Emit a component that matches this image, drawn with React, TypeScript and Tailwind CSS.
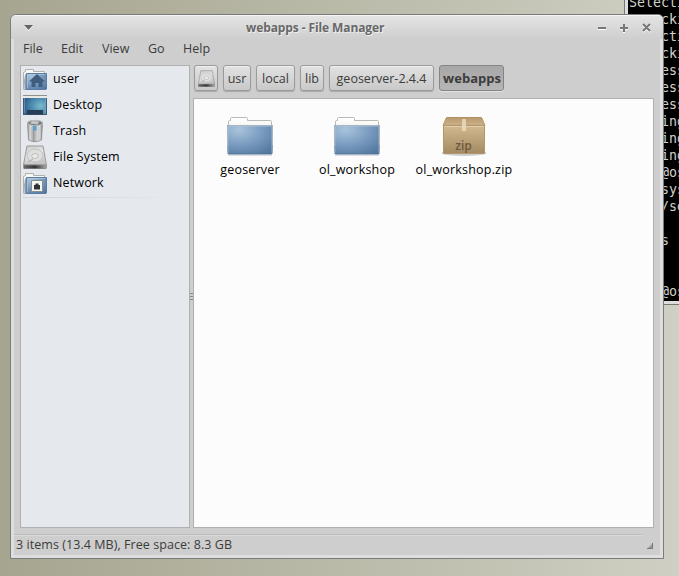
import React from 'react';

const terminalRows = ['Selecti', 'cki', 'cti', 'cki', 'ess', 'ess', 'ess', 'ing', 'ing', 'ing', '@os', 'sys', '/se', '', 's', '', '', '@os'];

const menus = [
  { label: 'File', width: 'w-[38px]' },
  { label: 'Edit', width: 'w-[41px]' },
  { label: 'View', width: 'w-[46px]' },
  { label: 'Go', width: 'w-[35px]' },
  { label: 'Help', width: 'w-[40px]' },
];

const crumbs = [
  { label: 'usr', width: 'w-[28px]' },
  { label: 'local', width: 'w-[39px]' },
  { label: 'lib', width: 'w-[24px]' },
  { label: 'geoserver-2.4.4', width: 'w-[105px]' },
];

function Gradients() {
  return (
    <svg className="absolute h-0 w-0">
      <defs>
        <radialGradient id="blue" cx="0.25" cy="0.15" r="1.1">
          <stop offset="0" stopColor="#a9c4dc" />
          <stop offset="0.5" stopColor="#789abf" />
          <stop offset="1" stopColor="#4d7199" />
        </radialGradient>
        <linearGradient id="paper" x2="0" y2="1">
          <stop offset="0" stopColor="#fff" />
          <stop offset="1" stopColor="#d9d9d5" />
        </linearGradient>
        <radialGradient id="screen" cx="0.75" cy="0.55" r="0.8">
          <stop offset="0" stopColor="#7cbccb" />
          <stop offset="0.5" stopColor="#4c8cb0" />
          <stop offset="1" stopColor="#2b5988" />
        </radialGradient>
        <linearGradient id="metal" x2="1" y2="0">
          <stop offset="0" stopColor="#85878a" />
          <stop offset="0.2" stopColor="#e9e9e9" />
          <stop offset="0.4" stopColor="#9a9c9e" />
          <stop offset="0.6" stopColor="#c9caca" />
          <stop offset="0.8" stopColor="#e6e6e6" />
          <stop offset="1" stopColor="#77797b" />
        </linearGradient>
        <linearGradient id="disk" x2="0.3" y2="1">
          <stop offset="0" stopColor="#cacaca" />
          <stop offset="0.5" stopColor="#e8e8e8" />
          <stop offset="1" stopColor="#c4c4c4" />
        </linearGradient>
        <linearGradient id="base" x2="1" y2="0">
          <stop offset="0" stopColor="#6a6a6a" />
          <stop offset="0.5" stopColor="#333" />
          <stop offset="1" stopColor="#aaa" />
        </linearGradient>
        <linearGradient id="box" x2="0" y2="1">
          <stop offset="0" stopColor="#d3b98f" />
          <stop offset="1" stopColor="#a48a62" />
        </linearGradient>
        <linearGradient id="lid" x2="0" y2="1">
          <stop offset="0" stopColor="#b99a6f" />
          <stop offset="1" stopColor="#cdb088" />
        </linearGradient>
      </defs>
    </svg>
  );
}

function Folder() {
  return (
    <svg width="48" height="48" viewBox="0 0 48 48" className="block">
      <path d="M2 38h44v1H2z" fill="#000" opacity=".13" />
      <path d="M2.5 36V4.500Q2.500 3.500 3.500 3.500H4.500V1.500Q4.500.5 5.500.5H20.500Q21.500.5 21.500 1.500V3.500H44.500Q45.500 3.500 45.500 4.500V36Z" fill="url(#paper)" stroke="#b9b9b5" />
      <path d="M1.500 8.500h45l-.5 28q0 .5-.5.5h-43q-.5 0-.5-.5z" fill="url(#blue)" stroke="#527397" />
      <path d="M2.500 36V9.500H45.500V36" fill="none" stroke="#c5d8e8" strokeOpacity=".3" />
      <path d="M1.500 29V8.500H46.500V28" fill="none" stroke="#b5bfc8" strokeOpacity=".85" />
    </svg>
  );
}

function SmallFolder({ kind }: { kind: 'home' | 'network' }) {
  return (
    <svg width="24" height="24" viewBox="0 0 24 24" className="block">
      <path d="M.5 20.500V5.500L2.500 4.500V2.500H10.500V4.500H21.500V9L3.500 22Z" fill="#f7f7f4" stroke="#b0b1af" />
      <path d="M.5 21.500L2.500 7.500V22.500H.8z" fill="#c9ced3" stroke="#a4abb1" />
      <path d="M3.500 6.500h20v15.500l-.5.5H3z" fill="url(#blue)" stroke="#5a7da5" />
      <path d="M4.500 21.500V7.500H22.500" fill="none" stroke="#b5cee3" strokeOpacity=".6" />
      {kind === 'home' ? (
        <path d="M14 7l8 7.500h-2.500V20H15.500v-4h-3v4H8.500v-5.500H6z" fill="#405d7f" />
      ) : (
        <>
          <path d="M8.500 9.500h11v11h-11z" fill="#f6f6f2" stroke="#8a8e8b" />
          <path d="M11 14h1.500v-1.500h3V14H17v4.500h-6z" fill="#303334" />
        </>
      )}
    </svg>
  );
}

function DesktopIcon() {
  return (
    <svg width="24" height="24" viewBox="0 0 24 24" className="block">
      <rect x=".5" y="2.500" width="23" height="19" fill="url(#screen)" stroke="#3c5b7b" />
      <path d="M0 2h24v3H0z" fill="#e8e8e5" />
      <path d="M0 2h24v1H0z" fill="#8f918f" />
      <path d="M4 17h16v4.500H4z" fill="#263d53" />
      <path d="M1.500 5v15.500M22.500 5v15.500" stroke="#86a9c4" strokeOpacity=".6" />
    </svg>
  );
}

function TrashIcon() {
  return (
    <svg width="24" height="24" viewBox="0 0 24 24" className="block">
      <path d="M4.500 4L5.500 21q6.500 3.500 13 0L19.500 4z" fill="url(#metal)" stroke="#8a8c8e" strokeWidth=".8" />
      <ellipse cx="12" cy="4" rx="7.500" ry="2.700" fill="#77797c" stroke="#b9baba" strokeWidth="1.200" />
      <path d="M7 4.500l2-2.500 7 .5-1 3z" fill="#c4c6c8" />
      <path d="M10 6.500l3.500.5v5l-1.500-1-2 1z" fill="#5aa0cf" />
      <path d="M8 8v13.500M16 8v13.500" stroke="#777" strokeOpacity=".35" />
    </svg>
  );
}

function DiskIcon({ size }: { size: number }) {
  return (
    <svg width={size} height={size} viewBox="0 0 24 24" className="block">
      <path d="M.7 19h22.600V23q0 .7-.7.700H1.400Q.7 23.700.7 23z" fill="url(#base)" stroke="#777" strokeWidth=".7" />
      <path d="M4 1h16l3.300 18q-.2.800-1 .800H1.700q-.8 0-1-.800z" fill="url(#disk)" stroke="#999" />
      <ellipse cx="12" cy="10.500" rx="8" ry="6.500" fill="#dedede" stroke="#c2c2c2" />
      <ellipse cx="12" cy="11" rx="3.300" ry="2.400" fill="#eaeaea" stroke="#bdbdbd" />
      <path d="M5 17l5-3" stroke="#aaa" />
    </svg>
  );
}

function ZipIcon() {
  return (
    <div className="relative h-12 w-12">
      <svg width="48" height="48" viewBox="0 0 48 48" className="block">
        <ellipse cx="24" cy="36" rx="22.500" ry="3" fill="#000" opacity=".18" />
        <path d="M6.500.5h35l3.500 8H3z" fill="url(#lid)" stroke="#b39366" />
        <path d="M3.500 8.500h41v28h-41z" fill="url(#box)" stroke="#b3966b" />
        <path d="M4.500 9.500h39" stroke="#e4cfaa" />
        <path d="M22 2h4v12h-4z" fill="#eee0c6" opacity=".75" />
      </svg>
      <span className="absolute left-0 top-[21px] w-12 text-center text-[12px] font-semibold leading-4 text-[#6b5a40]">zip</span>
    </div>
  );
}

const places = [
  { label: 'user', icon: <SmallFolder kind="home" /> },
  { label: 'Desktop', icon: <DesktopIcon /> },
  { label: 'Trash', icon: <TrashIcon /> },
  { label: 'File System', icon: <DiskIcon size={24} /> },
  { label: 'Network', icon: <SmallFolder kind="network" /> },
];

const files = [
  { label: 'geoserver', icon: <Folder /> },
  { label: 'ol_workshop', icon: <Folder /> },
  { label: 'ol_workshop.zip', icon: <ZipIcon /> },
];

function Terminal() {
  return (
    <div className="absolute left-[624px] top-0 h-[305px] w-[55px] overflow-hidden border-b border-l border-[#777] bg-[#dedede] pb-[3px] pl-[3px]">
      <div className="flow-root h-full bg-black pl-px font-['DejaVu_Sans_Mono',monospace] text-[13.300px] text-[#d0d0ca]">
        <div className="-mt-[6px]">
          {terminalRows.map((row, i) => (
            <div key={i} className={`h-[17px] whitespace-pre leading-[17px] ${i === 0 ? '' : 'pl-8'}`}>{row}</div>
          ))}
        </div>
      </div>
    </div>
  );
}

function TitleBar() {
  return (
    <header className="flex h-[23px] items-center bg-linear-to-b from-[#e4e4e4] to-[#cecece] pl-[13px] pr-[12px] pt-px">
      <svg width="9" height="6" viewBox="0 0 9 6"><path d="M0 1h9L4.500 6z" fill="#fff" /><path d="M0 0h9L4.500 5z" fill="#666" /></svg>
      <h1 className="ml-[213px] w-[140px] whitespace-nowrap text-[12px] font-bold leading-4 tracking-[-0.1px] text-[#686868] [text-shadow:1px_1px_0_#eee]">webapps - File Manager</h1>
      <svg className="ml-auto" width="54" height="12" viewBox="0 0 54 12">
        <g fill="none" stroke="#fff" strokeWidth="2" transform="translate(0 1)"><path d="M1 6h8M23 6h8M27 2v8M46 2l7 7M53 2l-7 7" /></g>
        <g fill="none" stroke="#777" strokeWidth="2"><path d="M1 6h8M23 6h8M27 2v8M46 2l7 7M53 2l-7 7" /></g>
      </svg>
    </header>
  );
}

function PathBar() {
  const button = 'flex h-[26px] items-center justify-center rounded-[3px] border border-[#9b9b9b] bg-linear-to-b from-[#e2e2e2] to-[#c9c9c9] shadow-[inset_0_1px_0_#f0f0f0,0_1px_1px_#aaa]';
  return (
    <nav className="flex h-[33px] gap-[5px] pl-px text-[12.500px]">
      <button className={`${button} w-[24px]`}><DiskIcon size={17} /></button>
      {crumbs.map((c) => <button key={c.label} className={`${button} pt-[2px] ${c.width}`}>{c.label}</button>)}
      <button className="flex h-[26px] w-[65px] items-center justify-center rounded-[3px] border border-[#858585] bg-linear-to-b from-[#a7a7a7] to-[#b6b6b6] pl-px pt-[2px] text-[13px] font-bold shadow-[0_1px_0_#e2e2e2]">webapps</button>
    </nav>
  );
}

export default function App() {
  return (
    <div className="relative h-[576px] w-[679px] overflow-hidden bg-linear-to-r from-[#a6a590] via-[#babaa9] to-[#cfcfc3] font-['Open_Sans','Noto_Sans',sans-serif] text-[12.500px] text-[#3c3c3c]">
      <Gradients />
      <Terminal />
      <main className="absolute left-[10px] top-[14px] flex h-[545px] w-[654px] flex-col overflow-hidden rounded-t-[6px] border border-[#7b7b7b] bg-[#cecece]">
        <div className="h-px shrink-0 bg-[#f5f5f5]" />
        <TitleBar />
        <div className="flex min-h-0 flex-1 flex-col border-x-[3px] border-b-[3px] border-[#dedede]">
          <div className="flex h-[26px] items-start pl-[9px] leading-[19px]">
            {menus.map((m) => <span key={m.label} className={m.width}>{m.label}</span>)}
          </div>
          <div className="flex h-[463px] pl-[6px]">
            <aside className="w-[170px] border border-[#b0b0b0] bg-[#e5e9ee] pl-[2px] text-black">
              {places.map((p) => (
                <div key={p.label} className="flex h-[26px] items-center gap-[6px]">{p.icon}<span className="tracking-[0.15px]">{p.label}</span></div>
              ))}
              <div className="mt-px h-px w-[155px] bg-linear-to-r from-[#cfd3d8] to-[#e5e9ee]" />
            </aside>
            <div className="flex w-[3px] flex-col items-center justify-center gap-[2px]">
              {[0, 1, 2].map((i) => <i key={i} className="block h-px w-[3px] bg-[#888]" />)}
            </div>
            <section className="flex w-[461px] flex-col">
              <PathBar />
              <div className="flex flex-1 items-start border border-[#b0b0b0] bg-[#fcfcfc] pl-[2px] pt-[18px] text-black">
                {files.map((f) => (
                  <div key={f.label} className="flex w-[107px] flex-col items-center">
                    {f.icon}
                    <span className="-mt-[4px] whitespace-nowrap pl-px leading-[18px] tracking-[0.2px]">{f.label}</span>
                  </div>
                ))}
              </div>
            </section>
          </div>
          <div className="mt-[6px] h-[2px] w-[628px] border-b border-t border-b-[#dadada] border-t-[#bcbcbc]" />
          <footer className="flex flex-1 items-center justify-between pl-[2px] pr-[7px]">
            <span className="tracking-[0.06px]">3 items (13.4 MB), Free space: 8.3 GB</span>
            <svg width="6" height="6" viewBox="0 0 6 6"><path d="M0 6L6 0V6z" fill="#999" /><path d="M0 5.500H5.500V0" fill="none" stroke="#777" /></svg>
          </footer>
        </div>
      </main>
    </div>
  );
}
